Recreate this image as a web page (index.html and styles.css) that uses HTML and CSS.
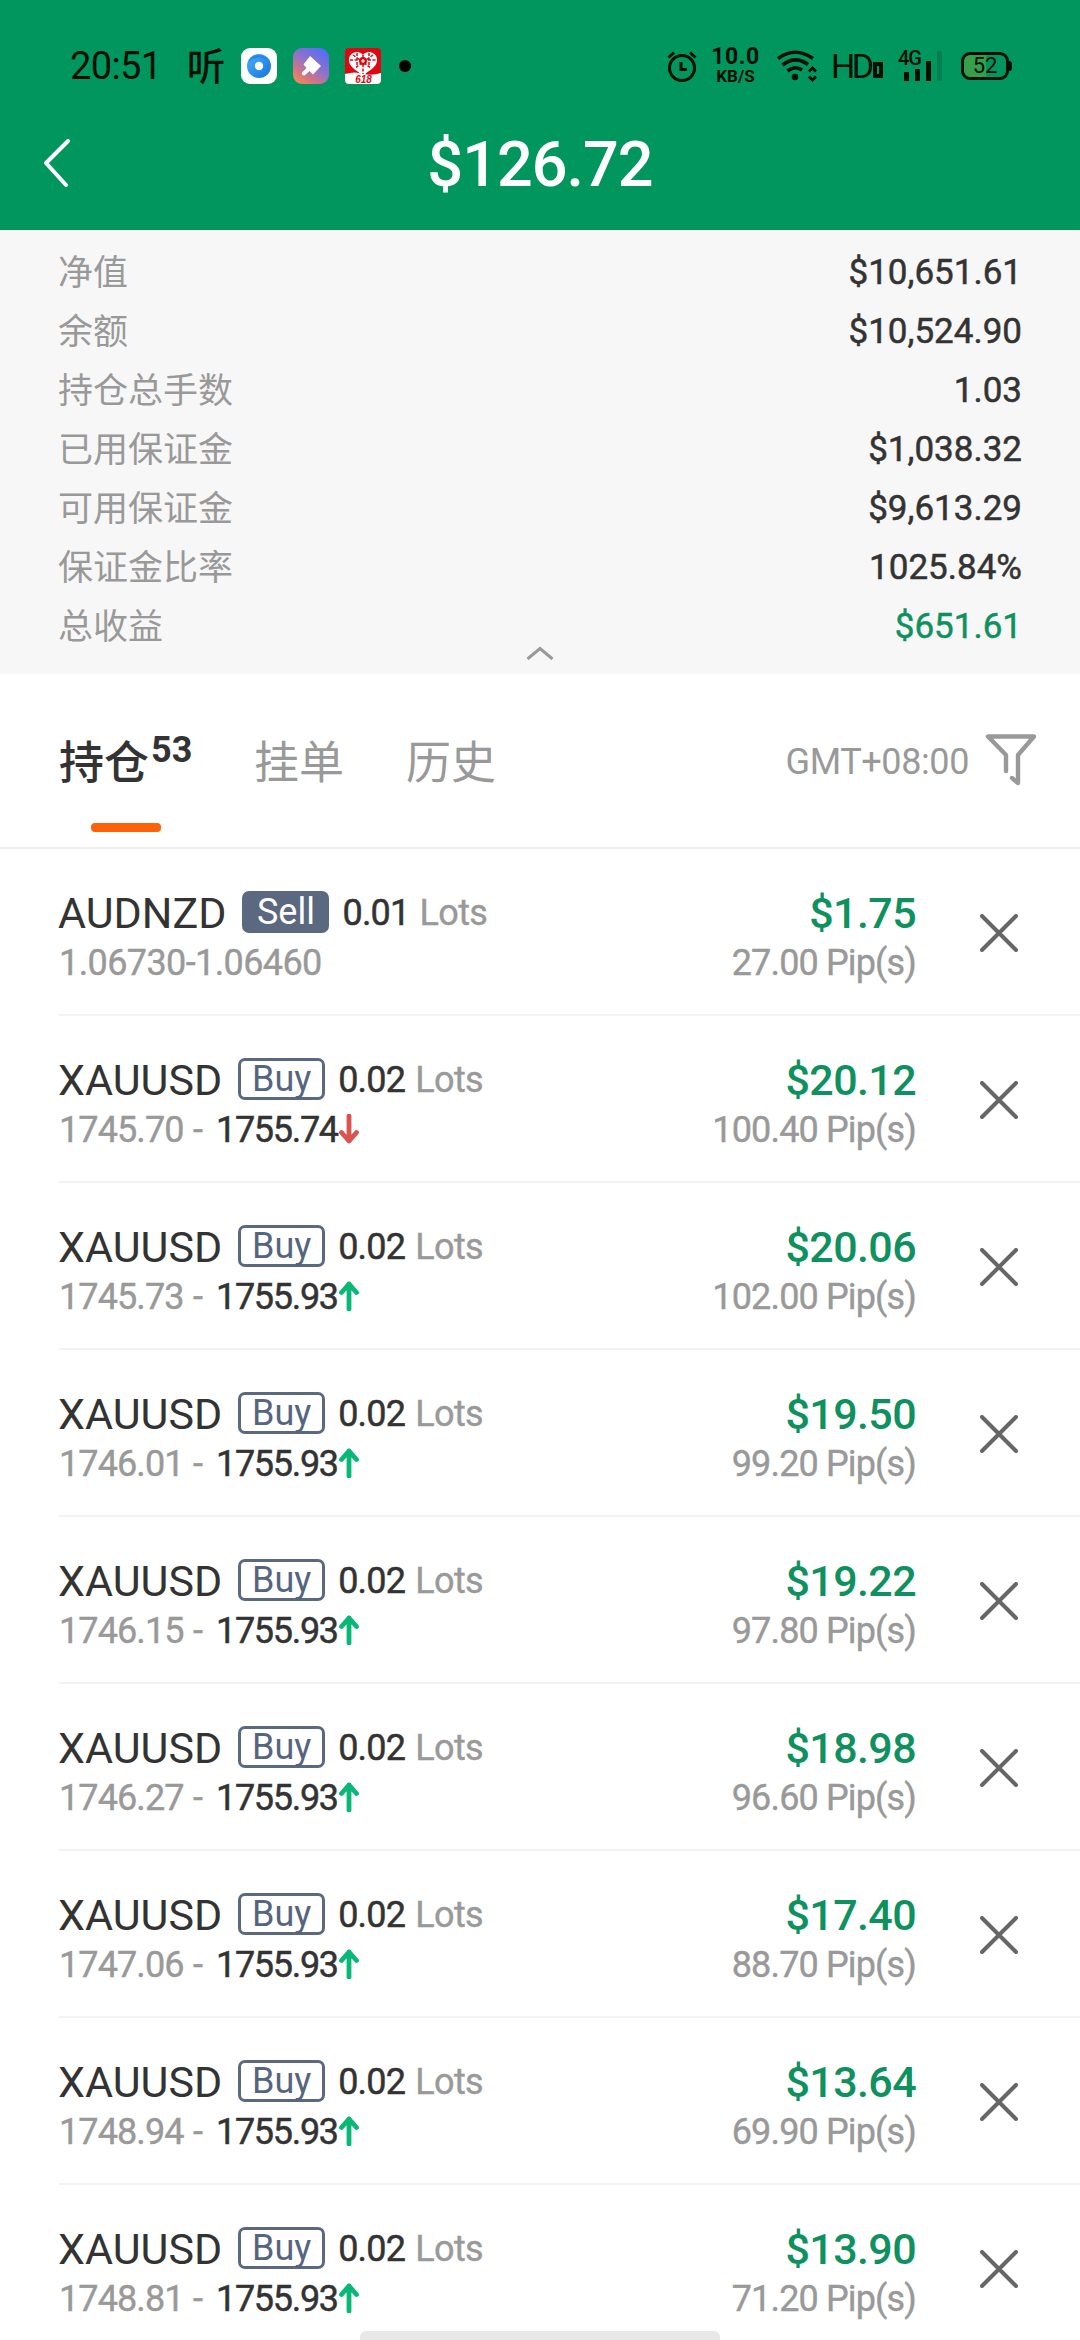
FILE: index.html
```html
<!DOCTYPE html>
<html lang="zh-CN">
<head>
<meta charset="utf-8">
<title>持仓</title>
<link rel="stylesheet" href="styles.css">
</head>
<body>
<svg class="defs" aria-hidden="true">
  <symbol id="close" viewBox="0 0 38 38"><path d="M2 2L36 36M36 2L2 36" fill="none" stroke="#666" stroke-width="4" stroke-linecap="round"/></symbol>
  <symbol id="arrow" viewBox="0 0 20 30"><path d="M10 28V3M2.5 11.5L10 3L17.5 11.5" fill="none" stroke="currentColor" stroke-width="4.8" stroke-linecap="round" stroke-linejoin="round"/></symbol>
</svg>
<header class="header">
  <div class="status">
    <div class="status-left">
      <span class="clock">20:51</span>
      <span class="listen">听</span>
      <svg class="app" viewBox="0 0 36 36"><defs><linearGradient id="b" x1="0" y1="0" x2="1" y2="1"><stop offset="0" stop-color="#4cb1fa"/><stop offset="1" stop-color="#1173dc"/></linearGradient></defs><rect width="36" height="36" rx="9" fill="#fff"/><circle cx="18" cy="18" r="12" fill="url(#b)"/><path d="M7 15Q9 7 17 7Q26 7 28 15Q22 8 15 10Q10 11 7 15Z" fill="#2386e8"/><circle cx="18" cy="18" r="4.2" fill="#fff"/></svg>
      <svg class="app" viewBox="0 0 36 36"><defs><linearGradient id="p" x1="0.9" y1="0" x2="0.2" y2="1"><stop offset="0" stop-color="#4d6dfb"/><stop offset=".5" stop-color="#9272c8"/><stop offset=".8" stop-color="#d8757d"/><stop offset="1" stop-color="#e98a60"/></linearGradient></defs><rect width="36" height="36" rx="9" fill="url(#p)"/><path d="M17 8L28 18L20 26.5L16.500 23L11.500 27.500Q8 27 9 24.500L13.500 20L10.500 16.500Z" fill="#fff"/></svg>
      <svg class="app" viewBox="0 0 36 36"><rect width="36" height="36" rx="4" fill="#de0812"/><path d="M0 26Q10 23 18 26Q27 28 36 25V32Q36 36 32 36H4Q0 36 0 32Z" fill="#fff"/><path d="M18 7C13 1 3 5 4 13C5 20 12 22 18 28C24 22 31 20 32 13C33 5 23 1 18 7Z" fill="#fff"/><path d="M18 7V26M12 5V20M24 5V20M5 12H31M8 7L26 20M28 7L10 20" stroke="#de0812" stroke-width="1.500" stroke-dasharray="3 1.500" fill="none"/><circle cx="18" cy="13" r="4" fill="#de0812"/><path d="M16 13H20M18 11V15" stroke="#fff" stroke-width="1.200"/><text x="18.500" y="35" class="promo">618</text></svg>
      <span class="dot"></span>
    </div>
    <div class="status-right">
      <svg class="alarm" viewBox="0 0 30 32"><g fill="none" stroke="#000f06" stroke-width="3"><circle cx="15" cy="18" r="12.500"/><path d="M14 12V19.500H20M1.500 7.500L7 2.500M23 2.500L28.500 7.500"/></g></svg>
      <div class="speed"><span class="speed-num">10.0</span><span class="speed-unit">KB/S</span></div>
      <svg class="wifi" viewBox="0 0 40 32"><g fill="none" stroke="#000f06" stroke-width="3.600"><path d="M1 8.500Q18 -4 36 8.500"/><path d="M5.500 15Q18 5 31 14.500"/><path d="M10.500 21Q18 15 25 20"/></g><circle cx="18" cy="27" r="3.300" fill="#000f06"/><path d="M32 21.500L35.500 18L39 21.500M32 26.500L35.500 30L39 26.500" fill="none" stroke="#000f06" stroke-width="3"/></svg>
      <span class="hd">HD<i class="hd-box"></i></span>
      <div class="signal"><span class="net">4G</span><svg class="bars" viewBox="0 0 38 20"><path d="M6 11H11V20H6ZM17 8H22V20H17ZM28 0H33V20H28Z" fill="#000f06"/></svg><i class="bar-off"></i></div>
      <div class="battery"><span>52</span></div>
    </div>
  </div>
  <div class="titlebar">
    <svg class="back" viewBox="0 0 30 50"><path d="M26 3L4 25L24 47" fill="none" stroke="#fff" stroke-width="4" stroke-linecap="round" stroke-linejoin="round"/></svg>
    <h1 class="total">$126.72</h1>
  </div>
</header>
<section class="summary">
  <div class="sum-row"><span>净值</span><b>$10,651.61</b></div>
  <div class="sum-row"><span>余额</span><b>$10,524.90</b></div>
  <div class="sum-row"><span>持仓总手数</span><b>1.03</b></div>
  <div class="sum-row"><span>已用保证金</span><b>$1,038.32</b></div>
  <div class="sum-row"><span>可用保证金</span><b>$9,613.29</b></div>
  <div class="sum-row"><span>保证金比率</span><b>1025.84%</b></div>
  <div class="sum-row"><span>总收益</span><b class="gain">$651.61</b></div>
  <svg class="collapse" viewBox="0 0 28 14"><path d="M1.500 13L14 2.500L26.500 13" fill="none" stroke="#999" stroke-width="3"/></svg>
</section>
<nav class="tabs">
  <div class="tab active">持仓<span class="count">53</span></div>
  <div class="tab">挂单</div>
  <div class="tab">历史</div>
  <div class="zone">GMT+08:00</div>
  <svg class="filter" viewBox="0 0 52 54"><path d="M21 38V22L3 3.500H49L33 22V50L27 45" fill="none" stroke="#999" stroke-width="4.400" stroke-linecap="round" stroke-linejoin="round"/></svg>
</nav>
<main class="list">
  <article class="row"><div class="info"><div class="line"><span class="name">AUDNZD</span><span class="tag sell">Sell</span><span class="lots">0.01</span><span class="unit">Lots</span></div><div class="line"><span class="open range">1.06730-1.06460</span></div></div><div class="result"><div class="line profit">$1.75</div><div class="line pips">27.00 Pip(s)</div></div><svg class="close"><use href="#close"/></svg></article>
  <article class="row"><div class="info"><div class="line"><span class="name">XAUUSD</span><span class="tag">Buy</span><span class="lots">0.02</span><span class="unit">Lots</span></div><div class="line"><span class="open">1745.70</span><span class="dash">-</span><span class="now">1755.74</span><svg class="arrow down"><use href="#arrow"/></svg></div></div><div class="result"><div class="line profit">$20.12</div><div class="line pips">100.40 Pip(s)</div></div><svg class="close"><use href="#close"/></svg></article>
  <article class="row"><div class="info"><div class="line"><span class="name">XAUUSD</span><span class="tag">Buy</span><span class="lots">0.02</span><span class="unit">Lots</span></div><div class="line"><span class="open">1745.73</span><span class="dash">-</span><span class="now">1755.93</span><svg class="arrow"><use href="#arrow"/></svg></div></div><div class="result"><div class="line profit">$20.06</div><div class="line pips">102.00 Pip(s)</div></div><svg class="close"><use href="#close"/></svg></article>
  <article class="row"><div class="info"><div class="line"><span class="name">XAUUSD</span><span class="tag">Buy</span><span class="lots">0.02</span><span class="unit">Lots</span></div><div class="line"><span class="open">1746.01</span><span class="dash">-</span><span class="now">1755.93</span><svg class="arrow"><use href="#arrow"/></svg></div></div><div class="result"><div class="line profit">$19.50</div><div class="line pips">99.20 Pip(s)</div></div><svg class="close"><use href="#close"/></svg></article>
  <article class="row"><div class="info"><div class="line"><span class="name">XAUUSD</span><span class="tag">Buy</span><span class="lots">0.02</span><span class="unit">Lots</span></div><div class="line"><span class="open">1746.15</span><span class="dash">-</span><span class="now">1755.93</span><svg class="arrow"><use href="#arrow"/></svg></div></div><div class="result"><div class="line profit">$19.22</div><div class="line pips">97.80 Pip(s)</div></div><svg class="close"><use href="#close"/></svg></article>
  <article class="row"><div class="info"><div class="line"><span class="name">XAUUSD</span><span class="tag">Buy</span><span class="lots">0.02</span><span class="unit">Lots</span></div><div class="line"><span class="open">1746.27</span><span class="dash">-</span><span class="now">1755.93</span><svg class="arrow"><use href="#arrow"/></svg></div></div><div class="result"><div class="line profit">$18.98</div><div class="line pips">96.60 Pip(s)</div></div><svg class="close"><use href="#close"/></svg></article>
  <article class="row"><div class="info"><div class="line"><span class="name">XAUUSD</span><span class="tag">Buy</span><span class="lots">0.02</span><span class="unit">Lots</span></div><div class="line"><span class="open">1747.06</span><span class="dash">-</span><span class="now">1755.93</span><svg class="arrow"><use href="#arrow"/></svg></div></div><div class="result"><div class="line profit">$17.40</div><div class="line pips">88.70 Pip(s)</div></div><svg class="close"><use href="#close"/></svg></article>
  <article class="row"><div class="info"><div class="line"><span class="name">XAUUSD</span><span class="tag">Buy</span><span class="lots">0.02</span><span class="unit">Lots</span></div><div class="line"><span class="open">1748.94</span><span class="dash">-</span><span class="now">1755.93</span><svg class="arrow"><use href="#arrow"/></svg></div></div><div class="result"><div class="line profit">$13.64</div><div class="line pips">69.90 Pip(s)</div></div><svg class="close"><use href="#close"/></svg></article>
  <article class="row"><div class="info"><div class="line"><span class="name">XAUUSD</span><span class="tag">Buy</span><span class="lots">0.02</span><span class="unit">Lots</span></div><div class="line"><span class="open">1748.81</span><span class="dash">-</span><span class="now">1755.93</span><svg class="arrow"><use href="#arrow"/></svg></div></div><div class="result"><div class="line profit">$13.90</div><div class="line pips">71.20 Pip(s)</div></div><svg class="close"><use href="#close"/></svg></article>
</main>
<div class="home-bar"></div>
</body>
</html>
```

FILE: styles.css
```css
* { box-sizing: border-box; }
html, body { margin: 0; padding: 0; }
body {
  position: relative;
  width: 1080px;
  height: 2340px;
  overflow: hidden;
  display: flex;
  flex-direction: column;
  background: #fff;
  color: #333;
  font-family: Roboto, "Noto Sans CJK SC", sans-serif;
}
svg { display: block; flex: none; }
.defs { position: absolute; width: 0; height: 0; }

.header { flex: none; height: 230px; background: #02965f; }
.status {
  height: 132px;
  padding: 0 69px 0 70px;
  display: flex;
  justify-content: space-between;
  align-items: center;
  color: #000f06;
}
.status-left, .status-right { display: flex; align-items: center; }
.clock { width: 117px; font-size: 38px; letter-spacing: -0.6px; white-space: nowrap; }
.listen { width: 54px; margin-top: -4px; font-size: 38px; line-height: 44px; font-family: "Noto Sans CJK SC", sans-serif; -webkit-text-stroke: 0.6px; }
.app { width: 36px; height: 36px; margin-right: 16px; }
.promo { font: italic bold 10px "Liberation Sans", sans-serif; fill: #de0812; text-anchor: middle; }
.dot { width: 12px; height: 12px; margin-left: 2px; border-radius: 50%; background: #000; }
.alarm { width: 30px; height: 32px; margin-right: 15px; }
.speed { width: 47px; margin-right: 18px; display: flex; flex-direction: column; align-items: center; font-weight: 700; }
.speed-num { font-size: 23px; line-height: 20px; letter-spacing: 0.6px; }
.speed-unit { font-size: 17px; line-height: 18px; }
.wifi { width: 40px; height: 32px; margin-right: 14px; }
.hd { width: 52px; display: flex; align-items: flex-end; font-size: 34px; line-height: 36px; letter-spacing: -3.5px; margin-right: 15px; }
.hd-box { width: 12px; height: 16px; margin: 0 0 6px 2px; border: 4px solid #000f06; }
.signal { position: relative; width: 46px; height: 32px; margin-right: 17px; }
.net { display: block; font-size: 20px; line-height: 16px; font-weight: 500; letter-spacing: -1px; }
.bars { position: absolute; left: 0; top: 11px; width: 38px; height: 20px; }
.bar-off { position: absolute; left: 39px; top: 1px; width: 5px; height: 30px; background: #047f4f; }
.battery {
  position: relative;
  width: 48px;
  height: 28px;
  margin-right: 2px;
  border: 3px solid #000f06;
  border-radius: 9px;
  background: linear-gradient(90deg, #379f49 52%, #02965f 52%);
  font-size: 22px;
  line-height: 22px;
  text-align: center;
}
.battery::after { content: ""; position: absolute; right: -6px; top: 6px; width: 4px; height: 10px; border-radius: 0 3px 3px 0; background: #000f06; }

.titlebar { display: grid; grid-template-columns: 120px 1fr 120px; align-items: center; height: 66px; }
.back { width: 30px; height: 50px; margin: -4px 0 0 42px; }
.total { margin: 0; color: #fff; font-size: 63px; line-height: 66px; font-weight: 500; text-align: center; letter-spacing: -1px; }

.summary { position: relative; flex: none; height: 444px; padding: 12px 58px 0 59px; background: #f7f7f7; }
.sum-row { display: flex; justify-content: space-between; height: 59px; align-items: center; color: #999; font-size: 35px; }
.sum-row span { margin: -4px 0 0 -1px; font-family: "Noto Sans CJK SC", sans-serif; line-height: 59px; }
.sum-row b { margin-top: 2px; font-weight: 400; color: #333; -webkit-text-stroke: 0.5px; }
.sum-row .gain { color: #0f915f; }
.collapse { position: absolute; left: 526px; top: 416px; width: 28px; height: 14px; }

.tabs { flex: none; display: flex; align-items: center; height: 175px; padding: 0 43px 0 59px; border-bottom: 2px solid #f0f0f0; }
.tab { position: relative; margin: -1px 63px 0 -1px; font: 400 45px/66px "Noto Sans CJK SC", sans-serif; color: #999; }
.tab.active { display: flex; margin: -1px 64px 0 0; font-weight: 500; color: #333; }
.tab.active::after { content: ""; position: absolute; left: 32px; bottom: -39px; width: 70px; height: 9px; border-radius: 4px; background: #fd620a; }
.count { width: 42px; padding-left: 2px; font: 700 36px/46px Roboto, sans-serif; }
.zone { margin: 3px 0 0 auto; font-size: 36px; color: #999; letter-spacing: -0.4px; }
.filter { width: 52px; height: 54px; margin: -2px 0 0 16px; }

.list { flex: none; }
.row { display: flex; height: 167px; margin-left: 59px; padding: 39px 62px 0 0; border-bottom: 2px solid #f3f3f3; }
.info { flex: 1; }
.line { display: flex; align-items: center; height: 50px; white-space: nowrap; font-size: 36px; }
.name { margin-left: -1px; font-size: 43px; letter-spacing: 0; }
.tag {
  height: 42px;
  width: 87px;
  margin: -3px 13px 0 16px;
  border: 3px solid #5a6880;
  border-radius: 7px;
  color: #56657f;
  font-size: 36px;
  line-height: 36px;
  text-align: center;
}
.tag.sell { background: #5a6880; color: #fff; }
.lots { -webkit-text-stroke: 0.5px; letter-spacing: -0.8px; }
.unit { margin-left: 10px; color: #999; letter-spacing: -0.6px; -webkit-text-stroke: 0.4px; }
.open, .dash { color: #999; -webkit-text-stroke: 0.4px; letter-spacing: -0.9px; }
.open { width: 123px; }
.open.range { width: auto; letter-spacing: -0.6px; }
.dash { width: 34px; padding-left: 11px; }
.now { width: 123px; -webkit-text-stroke: 0.5px; letter-spacing: -1.3px; }
.arrow { width: 20px; height: 30px; margin-top: -2px; color: #09b877; }
.arrow.down { color: #d9534f; transform: rotate(180deg); }
.result { text-align: right; }
.result .line { justify-content: flex-end; }
.profit { font-size: 43px; color: #0f915f; font-weight: 500; letter-spacing: -0.6px; }
.result .pips { color: #999; letter-spacing: -0.85px; -webkit-text-stroke: 0.4px; }
.close { width: 38px; height: 38px; margin: 26px 0 0 64px; }
.home-bar { position: absolute; left: 360px; top: 2331px; width: 360px; height: 14px; border-radius: 6px; background: #e8e8e8; }
```
